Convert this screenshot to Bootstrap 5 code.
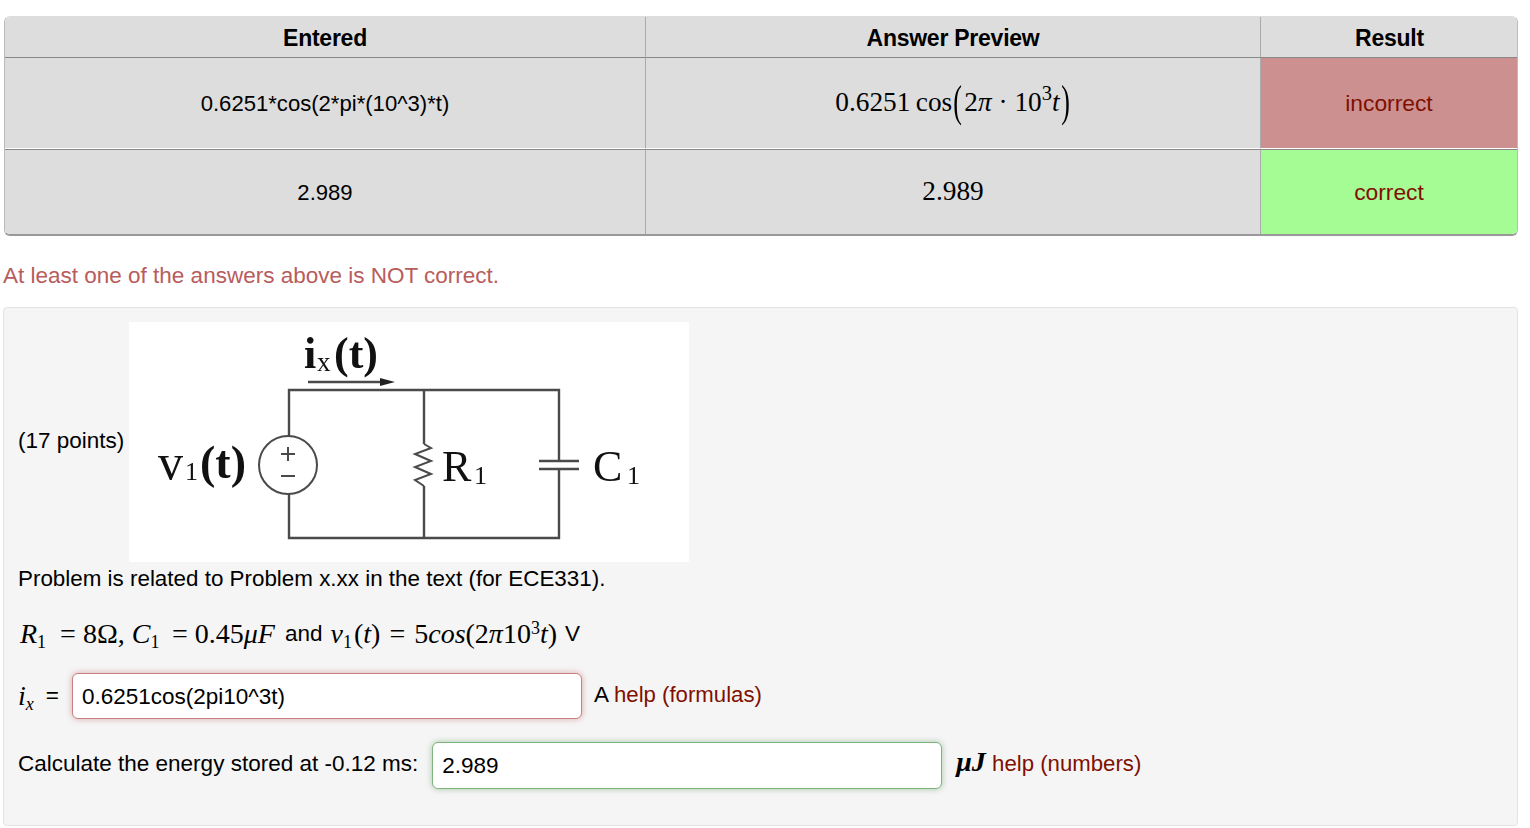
<!DOCTYPE html>
<html lang="en">
<head>
    <meta charset="UTF-8">
    <meta name="viewport" content="width=device-width, initial-scale=1.0">
    <link href="https://cdn.jsdelivr.net/npm/bootstrap@5.3.3/dist/css/bootstrap.min.css" rel="stylesheet">
    <title>Problem</title>
    <style>
        body {
            margin: 0;
            padding: 16px 12px 0 3px;
            font-family: "Liberation Sans", Arial, sans-serif;
            font-size: 22.5px;
            line-height: 30px;
            color: #000;
            background: #fff;
        }
        .attempt-wrap {
            margin-left: 1px;
            border: 1px solid #bbb;
            border-top-color: #ddd;
            border-bottom: 2px solid #999;
            border-radius: 6px;
            overflow: hidden;
        }
        table.attempt-table {
            width: 1513px;
            margin: 0;
            table-layout: fixed;
            border-collapse: separate;
            border-spacing: 0;
            font-size: 22.1px;
        }
        .attempt-table th, .attempt-table td {
            padding: 2px 0 0;
            text-align: center;
            vertical-align: middle;
            background: #ddd;
            color: #000;
            border-right: 1px solid #aaa;
            border-bottom: 1px solid #fff;
            border-top: 1px solid #888;
        }
        .attempt-table th { height: 40px; border-top: 0; border-bottom: 0; font-size: 23px; letter-spacing: -.25px; }
        .attempt-table .row-a td { height: 92px; }
        .attempt-table .row-b td { height: 85px; border-bottom: 0; }
        .attempt-table th:last-child { border-right: 0; }
        .attempt-table td:last-child { border-right: 1px solid #fff; }
        .attempt-table td.res-bad { background: #cc9090; color: #800f00; font-size: 22.8px; padding-top: 0; }
        .attempt-table td.res-good { background: #a6fc94; color: #800f00; font-size: 22.8px; padding-top: 0; }
        .attempt-table td.math-line {
            font-family: "Liberation Serif", "Times New Roman", serif;
            font-size: 27.3px;
            padding: 0 0 3px;
        }
        .big-paren { display: inline-block; margin: 0 1px; transform: scale(.95, 1.6); }
        .paren-gap { margin-right: 2px; }
        .warn-text { color: #b85c5c; margin: 25px 0 16px; }
        .problem-well {
            background: #f5f5f5;
            border: 1px solid #e3e3e3;
            border-radius: 4px;
            height: 519px;
            padding: 14px 14px;
        }
        .points-label { padding-bottom: 2px; }
        .circuit-pic { display: block; background: #fff; margin-left: 5px; }
        .circuit-pic text { font-family: "Liberation Serif", serif; fill: #111; }
        .circuit-pic .sharp-blur { filter: blur(.5px); }
        .inline-math {
            font-family: "Liberation Serif", "Times New Roman", serif;
            font-size: 28px;
        }
        .inline-math sub, .inline-math sup { font-size: 18px; }
        .math-start { margin-left: 2px; margin-right: 2px; }
        .sub-gap { margin-right: 2px; }
        .eq-sign { margin: 0 9px; }
        .ix-eq { margin: 0 13px 0 12px; }
        .ans-input.form-control {
            width: 510px;
            height: 46px;
            padding: 0 9px;
            font-size: 22.5px;
            color: #000;
            background: #fff;
            border-radius: 6px;
        }
        .ans-bad.form-control { padding-top: 2px; border: 1px solid #c98080; box-shadow: 0 0 6px rgba(185,74,72,.45); }
        .ans-good.form-control { height: 47px; border: 1px solid #7db57d; box-shadow: 0 0 6px rgba(70,136,71,.45); }
        .help-link { color: #800f00; text-decoration: none; font-size: 22.2px; }
        .line-one { margin-top: 2px; font-size: 22.4px; }
        .line-two { margin-top: 22px; height: 36px; }
        .line-three { margin-top: 21px; height: 46px; }
        .line-four { margin-top: 23px; height: 47px; }
        .calc-label { margin-right: 14px; padding-bottom: 4px; }
        .unit-gap { margin-left: 14px; padding-bottom: 6px; }
        .unit-a { padding-bottom: 2px; }
    </style>
</head>
<body>
    <div class="attempt-wrap">
        <table class="table attempt-table">
            <colgroup>
                <col style="width: 641px">
                <col style="width: 615px">
                <col style="width: 257px">
            </colgroup>
            <thead>
                <tr><th>Entered</th><th>Answer Preview</th><th>Result</th></tr>
            </thead>
            <tbody>
                <tr class="row-a">
                    <td>0.6251*cos(2*pi*(10^3)*t)</td>
                    <td class="math-line">0.6251&thinsp;cos<span class="big-paren paren-gap">(</span>2<i>π</i> · 10<sup>3</sup><i>t</i><span class="big-paren">)</span></td>
                    <td class="res-bad">incorrect</td>
                </tr>
                <tr class="row-b">
                    <td>2.989</td>
                    <td class="math-line">2.989</td>
                    <td class="res-good">correct</td>
                </tr>
            </tbody>
        </table>
    </div>

    <p class="warn-text">At least one of the answers above is NOT correct.</p>

    <div class="problem-well">
        <div class="d-flex align-items-center">
            <span class="points-label">(17 points)</span>
            <svg class="circuit-pic" width="560" height="240" viewBox="0 0 560 240">
                <g class="sharp-blur">
                    <g fill="none" stroke="#4a4a4a" stroke-width="2.4">
                        <path d="M160 114V68H430V139M430 147V216H160V172"/>
                        <path d="M295 68V122M295 164V216"/>
                        <circle cx="159" cy="143" r="29" stroke-width="2"/>
                        <path d="M295 122L302 126L286 132L302 139L286 145L302 152L286 158L295 164" stroke-width="2"/>
                        <path d="M410 139H450M410 147H450"/>
                        <path d="M179 60H255"/>
                        <path d="M152 132H166M159 125V139M152 154H166" stroke-width="2"/>
                    </g>
                    <path d="M251 56L266 60L251 64Z" fill="#222"/>
                    <text x="175" y="46" font-size="44" font-weight="700">i</text>
                    <text x="188" y="49" font-size="27">x</text>
                    <text x="205" y="46" font-size="44" font-weight="700">(t)</text>
                    <text x="29" y="157" font-size="50">v</text>
                    <text x="56" y="158" font-size="26">1</text>
                    <text x="71" y="156" font-size="46" font-weight="700">(t)</text>
                    <text x="313" y="159" font-size="44">R</text>
                    <text x="345" y="162" font-size="26">1</text>
                    <text x="464" y="159" font-size="44">C</text>
                    <text x="498" y="162" font-size="26">1</text>
                </g>
            </svg>
        </div>
        <div class="line-one">Problem is related to Problem x.xx in the text (for ECE331).</div>
        <div class="line-two d-flex align-items-center">
            <span class="inline-math math-start"><i>R</i><sub>1</sub> &nbsp;= 8Ω, <i>C</i><sub>1</sub>&thinsp; = 0.45<i>μF</i></span>
            <span class="ms-2">and</span>
            <span class="inline-math ms-2"><i>v</i><sub class="sub-gap">1</sub>(<i>t</i>)<span class="eq-sign">=</span>5<i>cos</i>(2<i>π</i>10<sup>3</sup><i>t</i>)</span>
            <span class="ms-2">V</span>
        </div>
        <div class="line-three d-flex align-items-center">
            <span class="inline-math"><i>i</i><sub><i>x</i></sub></span>
            <span class="ix-eq">=</span>
            <input class="form-control ans-input ans-bad" type="text" value="0.6251cos(2pi10^3t)">
            <span class="ms-2 ps-1 unit-a">A <a class="help-link" href="#">help (formulas)</a></span>
        </div>
        <div class="line-four d-flex align-items-center">
            <span class="calc-label">Calculate the energy stored at -0.12 ms:</span>
            <input class="form-control ans-input ans-good" type="text" value="2.989">
            <span class="unit-gap"><span class="inline-math"><b><i>μJ</i></b></span> <a class="help-link" href="#">help (numbers)</a></span>
        </div>
    </div>
</body>
</html>
